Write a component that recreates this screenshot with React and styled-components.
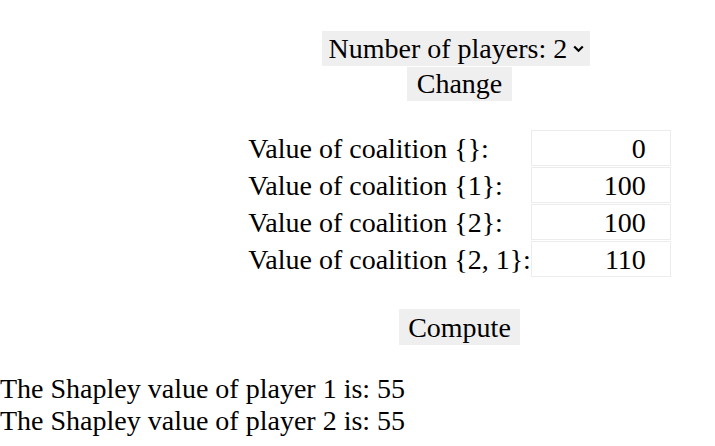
import React, { useState } from "react";
import styled, { createGlobalStyle } from "styled-components";

const GlobalStyle = createGlobalStyle`
  html, body {
    margin: 0;
    padding: 0;
    background: #fff;
  }
  body {
    font-family: "Liberation Serif", "Times New Roman", serif;
    font-size: 28px;
    color: #000;
  }
`;

const Page = styled.div`
  padding-top: 31px;
`;

const Center = styled.div`
  display: flex;
  flex-direction: column;
  align-items: center;
  padding-left: 204px;
`;

const SelectWrap = styled.div`
  position: relative;
  display: inline-flex;
  margin-right: 8px;
`;

const Select = styled.select`
  appearance: none;
  font: inherit;
  color: #000;
  background: #efefef;
  border: none;
  border-radius: 0;
  height: 35px;
  padding: 0 22px 0 7px;
  outline: none;
`;

const Chevron = styled.svg`
  position: absolute;
  right: 6px;
  top: 14px;
  pointer-events: none;
`;

const Button = styled.button`
  font: inherit;
  color: #000;
  background: #efefef;
  border: none;
  border-radius: 0;
  height: ${(p) => p.h || 34}px;
  padding: 0 ${(p) => p.px || 10}px;
  margin-top: ${(p) => p.mt || 0}px;
  line-height: 1;
`;

const Table = styled.div`
  display: grid;
  grid-template-columns: auto 140px;
  grid-auto-rows: 36px;
  row-gap: 1px;
  align-items: center;
  margin-top: 29px;
`;

const Label = styled.span`
  white-space: nowrap;
  padding-top: 2px;
`;

const ValueInput = styled.input`
  font: inherit;
  color: #000;
  width: 100%;
  height: 36px;
  box-sizing: border-box;
  border: 1px solid #ececec;
  border-radius: 0;
  text-align: right;
  padding: 2px 24px 0 4px;
  outline: none;
`;

const Results = styled.div`
  margin-top: 28px;
  line-height: 32px;
`;

const coalitions = [
  { label: "{}", value: 0 },
  { label: "{1}", value: 100 },
  { label: "{2}", value: 100 },
  { label: "{2, 1}", value: 110 },
];

export default function App() {
  const [players, setPlayers] = useState("2");
  const [values, setValues] = useState(coalitions.map((c) => c.value));

  return (
    <Page>
      <GlobalStyle />
      <Center>
        <SelectWrap>
          <Select value={players} onChange={(e) => setPlayers(e.target.value)}>
            <option value="1">Number of players: 1</option>
            <option value="2">Number of players: 2</option>
            <option value="3">Number of players: 3</option>
          </Select>
          <Chevron width="11" height="8" viewBox="0 0 11 8">
            <path d="M1.2 1.5 L5.5 5.8 L9.8 1.5" fill="none" stroke="#000" strokeWidth="2.2" />
          </Chevron>
        </SelectWrap>
        <Button mt={1} px={10}>Change</Button>
        <Table>
          {coalitions.map((c, i) => (
            <React.Fragment key={c.label}>
              <Label>Value of coalition {c.label}:</Label>
              <ValueInput
                type="text"
                value={values[i]}
                onChange={(e) => {
                  const next = values.slice();
                  next[i] = e.target.value;
                  setValues(next);
                }}
              />
            </React.Fragment>
          ))}
        </Table>
        <Button mt={32} h={36} px={9} style={{ paddingTop: 2 }}>Compute</Button>
      </Center>
      <Results>
        <div>The Shapley value of player 1 is: 55</div>
        <div>The Shapley value of player 2 is: 55</div>
      </Results>
    </Page>
  );
}
